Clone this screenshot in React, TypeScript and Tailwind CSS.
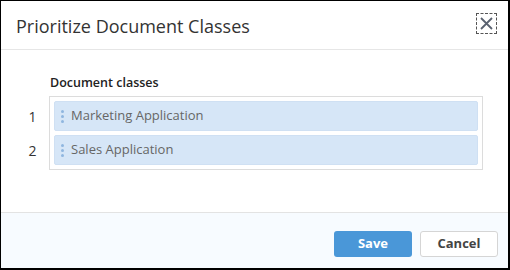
const classes = ["Marketing Application", "Sales Application"];

const App = () => {
  return (
    <div
      className="w-[510px] h-[270px] bg-white border-l border-t border-r-2 border-b-2 border-black flex flex-col"
      style={{ fontFamily: '"Open Sans", "Liberation Sans", sans-serif' }}
    >
      {/* header */}
      <div className="h-[49px] shrink-0 flex items-center justify-between pl-[15px] pr-[11px] border-b border-[#e6e6e6]">
        <h1 className="text-[18px] text-[#333] leading-none pt-[1px]">Prioritize Document Classes</h1>
        <button className="w-[21px] h-[21px] border border-dashed border-[#555] flex items-center justify-center -mt-[3px]">
          <svg width="13" height="13" viewBox="0 0 13 13" fill="none" stroke="#5a6270" strokeWidth="1.8">
            <path d="M1 1 L12 12 M12 1 L1 12" />
          </svg>
        </button>
      </div>

      {/* body */}
      <div className="flex-1 pl-[15px] pr-[25px] pt-[24px]">
        <div className="pl-[34px] text-[12.5px] font-semibold text-[#222] leading-[18px]">Document classes</div>
        <div className="flex mt-[4px]">
          <div className="w-[33px] pt-[5px] flex flex-col gap-[4px]">
            {classes.map((_, i) => (
              <div key={i} className="h-[30px] flex items-center justify-center text-[14px] text-[#333]">
                {i + 1}
              </div>
            ))}
          </div>
          <div className="flex-1 border border-[#dcdcdc] p-[4px] flex flex-col gap-[4px]">
            {classes.map((name) => (
              <div
                key={name}
                className="h-[30px] flex items-center bg-[#d6e6f7] border border-[#cfe0f3] rounded-[2px] pl-[6px]"
              >
                <div className="flex flex-col gap-[2px] mr-[7px]">
                  <span className="w-[3px] h-[3px] rounded-full bg-[#8fb6df]" />
                  <span className="w-[3px] h-[3px] rounded-full bg-[#8fb6df]" />
                  <span className="w-[3px] h-[3px] rounded-full bg-[#8fb6df]" />
                </div>
                <span className="text-[13px] text-[#666]">{name}</span>
              </div>
            ))}
          </div>
        </div>
      </div>

      {/* footer */}
      <div className="h-[56px] shrink-0 bg-[#f7fbff] border-t border-[#e3e3e3] flex justify-end items-start gap-[8px] pt-[18px] pr-[10px]">
        <button className="w-[78px] h-[26px] rounded-[3px] bg-[#4a97d8] text-white text-[13px] font-bold">
          Save
        </button>
        <button className="w-[78px] h-[26px] rounded-[3px] bg-white border border-[#d5d5d5] text-[#444] text-[13px] font-bold">
          Cancel
        </button>
      </div>
    </div>
  );
};

export default App;
